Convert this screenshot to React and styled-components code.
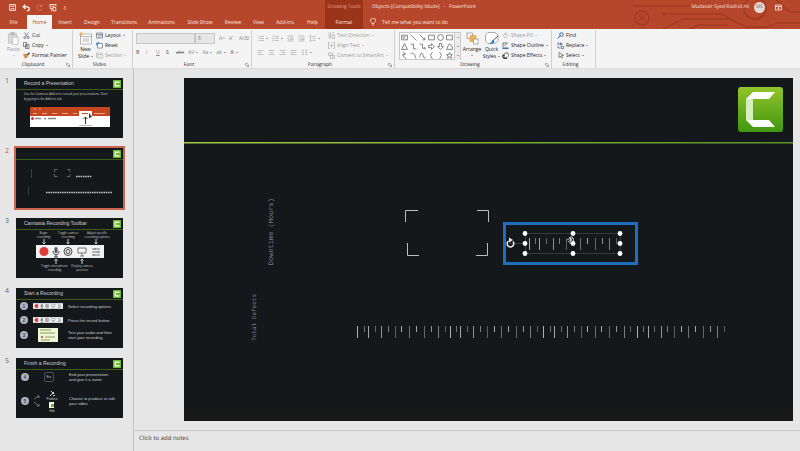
import React from 'react';
import styled, { createGlobalStyle } from 'styled-components';

const GlobalStyle = createGlobalStyle`
  * { box-sizing: border-box; }
  body {
    margin: 0;
    background: #e6e6e6;
    font-family: "Open Sans", "Noto Sans", sans-serif;
    font-size: 5px;
    line-height: 7px;
    color: #222;
    text-rendering: geometricPrecision;
  }
  button, select {
    font: inherit;
    color: inherit;
    border: 0;
    margin: 0;
    padding: 0;
    background: none;
  }
  svg { display: block; flex: none; }
`;

const Page = styled.div`
  display: flex;
  flex-direction: column;
  min-height: 100vh;
  overflow: hidden;
`;

/* ---------- title bar and tabs ---------- */

const Header = styled.header`
  position: relative;
  background: #b7472a;
  color: #fbe9e3;
`;

const Circuit = styled.svg`
  position: absolute;
  top: 0;
  right: 0;
  fill: none;
  stroke: #a03d23;
  stroke-width: 1.5;
`;

const TitleBar = styled.div`
  position: relative;
  display: grid;
  grid-template-columns: 325px 38px 1fr auto;
  align-items: center;
  height: 15px;
`;

const QuickAccess = styled.div`
  display: flex;
  align-items: center;
  gap: 6px;
  padding-left: 9px;
`;

const ToolTitle = styled.div`
  height: 15px;
  line-height: 14px;
  text-align: center;
  background: #9a3519;
  color: #e3a48f;
`;

const DocTitle = styled.div`
  padding-left: 9px;
  white-space: nowrap;
`;

const Account = styled.div`
  display: flex;
  align-items: center;
  gap: 5px;
  padding-right: 18px;
  white-space: nowrap;
`;

const Avatar = styled.span`
  width: 11px;
  height: 11px;
  line-height: 11px;
  margin-right: 5px;
  border-radius: 50%;
  text-align: center;
  background: #e4d9d6;
  color: #6d5a55;
`;

const Tabs = styled.nav`
  position: relative;
  display: grid;
  grid-template-columns: 27px 25px 26px 28px 36px 39px 38px 28px 23px 30px 25px 38px auto;
  justify-content: start;
  height: 14px;
`;

const Tab = styled.button`
  white-space: nowrap;
  background: ${(p) => (p.$active ? '#f5f4f4' : p.$context ? '#9a3519' : 'transparent')};
  color: ${(p) => (p.$active ? '#b7472a' : 'inherit')};
`;

const TellMe = styled.button`
  display: flex;
  align-items: center;
  gap: 6px;
  padding-left: 7px;
`;

/* ---------- ribbon ---------- */

const Ribbon = styled.div`
  display: flex;
  height: 40px;
  background: #f4f4f4;
  border-bottom: 1px solid #dcdcdc;
`;

const Group = styled.section`
  display: flex;
  flex-direction: column;
  width: ${(p) => p.$width}px;
  margin-top: 1px;
  border-right: 1px solid #cfcfcf;
`;

const GroupBody = styled.div`
  display: flex;
  flex: 1;
  gap: ${(p) => p.$gap || 4}px;
  padding-left: ${(p) => p.$pad || 6}px;
`;

const GroupFoot = styled.div`
  display: grid;
  grid-template-columns: 1fr 6px;
  align-items: center;
  text-align: center;
  height: 6px;
  line-height: 6px;
`;

const Stack = styled.div`
  display: grid;
  grid-template-rows: repeat(3, 10px);
  justify-items: start;
`;

const SmallButton = styled.button`
  display: flex;
  align-items: center;
  gap: 2px;
  white-space: nowrap;
  opacity: ${(p) => (p.$off ? 0.45 : 1)};
`;

const BigButton = styled.button`
  display: flex;
  flex-direction: column;
  align-items: center;
  justify-content: flex-start;
  width: ${(p) => p.$width || 15}px;
  padding-top: 2px;
  opacity: ${(p) => (p.$off ? 0.45 : 1)};
  > svg { margin-bottom: 1px; }
  > i { margin-top: 2px; }
`;

const Caret = styled.i`
  width: 0;
  height: 0;
  border: 1px solid transparent;
  border-top-color: #555;
  border-bottom: 0;
`;

const BigLabel = styled.span`
  display: flex;
  align-items: center;
  gap: 2px;
  line-height: 7px;
`;

const Rows = styled.div`
  display: flex;
  flex-direction: column;
  gap: 3px;
  padding-top: 3px;
  color: #888;
`;

const Line = styled.div`
  display: flex;
  align-items: center;
  gap: 4px;
  height: 11px;
`;

const Pick = styled.select`
  appearance: none;
  width: ${(p) => p.$width}px;
  height: 11px;
  padding-left: 2px;
  margin-right: -4px;
  background: #e6e6e6;
  border: 1px solid #c8c8c8;
`;

const Glyph = styled.button`
  display: flex;
  align-items: center;
  gap: 2px;
  min-width: 6px;
  font-weight: ${(p) => (p.$bold ? 700 : 400)};
  font-style: ${(p) => (p.$italic ? 'italic' : 'normal')};
  text-decoration: ${(p) => p.$line || 'none'};
`;

const Gallery = styled.div`
  display: grid;
  grid-template-columns: repeat(6, 9px) 6px;
  grid-template-rows: repeat(3, 9px);
  margin-top: 2px;
  height: 28px;
  border: 1px solid #c9c9c9;
  background: #fdfdfd;
`;

const Shape = styled.button`
  display: grid;
  place-items: center;
  ${(p) => p.$scroll && 'background: #ececec; border-left: 1px solid #c9c9c9;'}
`;

/* ---------- work area ---------- */

const Work = styled.main`
  flex: 1;
  display: grid;
  grid-template-columns: 134px 1fr;
`;

const Pane = styled.aside`
  display: flex;
  flex-direction: column;
  gap: 10px;
  padding: 9px 0 0 5px;
  border-right: 1px solid #c4c4c4;
`;

const ThumbRow = styled.div`
  display: grid;
  grid-template-columns: 11px 107px;
  height: 60px;
  font-size: 7px;
  color: ${(p) => (p.$selected ? '#d0573a' : '#666')};
`;

const Thumb = styled.button`
  display: flex;
  flex-direction: column;
  height: 60px;
  text-align: left;
  overflow: hidden;
  background: #14181a;
  color: #c9ced0;
  font-family: "Liberation Sans", Arial, sans-serif;
  font-size: 4px;
  line-height: 5px;
  outline: ${(p) => (p.$selected ? '2px solid #cb6550' : '0')};
`;

const ThumbHead = styled.div`
  display: flex;
  justify-content: space-between;
  align-items: center;
  width: 100%;
  height: 12px;
  padding: 0 2px 0 8px;
  font-size: 5px;
  border-bottom: 1px solid #3a5e1a;
`;

const ThumbText = styled.p`
  margin: 2px 0 0 8px;
  font-family: "Open Sans", sans-serif;
  font-size: 3px;
  line-height: 5px;
  white-space: nowrap;
`;

const AddinBar = styled.div`
  align-self: center;
  width: 80px;
  margin-top: 5px;
  background: #fff;
`;

const Captions = styled.div`
  display: grid;
  grid-template-columns: ${(p) => p.$cols};
  justify-items: center;
  margin-left: ${(p) => p.$left}px;
  padding-top: ${(p) => p.$top || 0}px;
  font-family: "Open Sans", sans-serif;
  font-size: 3px;
  line-height: 4px;
  text-align: center;
  white-space: nowrap;
`;

const Steps = styled.div`
  display: grid;
  grid-template-columns: 8px 30px 1fr;
  grid-template-rows: ${(p) => p.$rows};
  column-gap: 5px;
  align-items: center;
  width: 100%;
  padding-left: ${(p) => p.$left || 4}px;
`;

const Bullet = styled.span`
  width: 8px;
  height: 8px;
  line-height: 8px;
  border-radius: 50%;
  text-align: center;
  font-size: 5px;
  background: #aeb4c0;
  color: #222;
`;

const Key = styled.span`
  justify-self: center;
  width: 10px;
  height: 10px;
  line-height: 8px;
  text-align: center;
  font-size: 3px;
  border: 1px solid #4b5154;
  border-radius: 2px;
`;

const Outputs = styled.span`
  display: grid;
  grid-template-columns: 7px 22px;
  align-items: center;
  font-size: 3px;
  line-height: 4px;
  text-align: center;
`;

const Editor = styled.div`
  display: flex;
  flex-direction: column;
  min-width: 0;
`;

const Stage = styled.div`
  padding: 9px 7px 9px 50px;
  border-bottom: 1px solid #c9c9c9;
`;

const Slide = styled.div`
  position: relative;
  background: linear-gradient(#14181a 96%, #191919 97%);
`;

const AxisLabel = styled.span`
  position: absolute;
  left: ${(p) => p.$x}%;
  top: ${(p) => p.$y}%;
  writing-mode: vertical-rl;
  transform: rotate(180deg);
  white-space: nowrap;
  font-family: "Liberation Mono", monospace;
  font-size: ${(p) => p.$size}px;
  line-height: 7px;
  color: #7b8188;
`;

const Notes = styled.div`
  padding: 3px 5px;
  font-size: 6px;
  line-height: 8px;
  color: #444;
`;

/* ---------- drawings ---------- */

const Icon = ({ w = 7, h = w, box = '0 0 14 14', stroke = '#555', sw = 1.4, fill = 'none', children }) => (
  <svg width={w} height={h} viewBox={box} fill={fill} stroke={stroke} strokeWidth={sw} aria-hidden="true">
    {children}
  </svg>
);

const icons = {
  cut: <Icon stroke="#4a5a80"><path d="M3 1l6 8M11 1L5 9" /><circle cx="3.5" cy="11" r="2" /><circle cx="10.5" cy="11" r="2" /></Icon>,
  copy: <Icon><path d="M1 1h6v8H1zM5 5h7v8H5zM7 8h3M7 10.500h3" fill="#fff" /></Icon>,
  brush: <Icon stroke="#555"><path d="M8 5l4-4 1 2-4 4z" fill="#444" /><path d="M1 5l4 8 5-5-4-4z" fill="#e88b3c" stroke="#d87a2c" /></Icon>,
  layout: <Icon stroke="#5b6b80"><path d="M1 2h12v10H1z" fill="#fff" /><path d="M1 5h12M6 5v7M8 8h4" /></Icon>,
  reset: <Icon stroke="#5b6b80"><path d="M3 3h10v9H3z" fill="#fff" /><path d="M1 7V2h5M6 2l-2-2M6 2L4 4" stroke="#2f6fb0" /></Icon>,
  section: <Icon><path d="M4 5h9v7H4zM1 2h6M1 2v9M9 2h4" /></Icon>,
  direction: <Icon><path d="M2 1v12M5 1v12M8 6h5v7H8zM8 2h5" /></Icon>,
  align: <Icon><path d="M4 1H1v12h3M10 1h3v12h-3M4 7h6M7 3v8" /></Icon>,
  smart: <Icon><path d="M1 2h8v5H1zM5 7h8v6H5zM8 10h3" /></Icon>,
  fill: <Icon><path d="M2 7l5-5 5 5-5 5zM7 1v5" /></Icon>,
  outline: <Icon stroke="#444"><path d="M2 2h8M2 2v8M5 8l7-7" /><path d="M1 12.500h12" stroke="#2f6fb0" strokeWidth="3" /></Icon>,
  effects: <Icon stroke="#444"><path d="M6 2h6l1 6-3 3H4z" fill="#fff" /><path d="M4 5l-3 3 3 5h6" strokeWidth="2.500" /></Icon>,
  find: <Icon stroke="#2f5f9e" sw={2}><circle cx="9" cy="5" r="3.500" /><path d="M6.500 8L1 13" /></Icon>,
  replace: <Icon stroke="#4a5a80"><path d="M1 6l2-5 2 5M7 1v5h3V3H7M2 8v4h4M8 9h5v4H8z" /></Icon>,
  select: <Icon><path d="M4 1v10l3-3 2 4 2-1-2-4h4z" fill="#fff" /></Icon>,
};

const Launcher = () => (
  <Icon w={4} box="0 0 8 8" stroke="#888"><path d="M1 5V1h4M3 3l4 4M7 3v4H3" /></Icon>
);

const Logo = ({ size }) => (
  <svg width={size} height={size} viewBox="0 0 45 45" aria-hidden="true">
    <rect width="45" height="45" rx="3" fill="#6cbb2a" />
    <path d="M9 9h28v6H16v15h21v6H9z" fill="#fff" />
  </svg>
);

const RecorderIcons = ({ width, height }) => (
  <svg width={width} height={height} viewBox="0 0 68 13" fill="none" stroke="#444" strokeWidth="1" aria-hidden="true">
    <rect width="68" height="13" fill="#f2f2f2" stroke="none" />
    <circle cx="8" cy="6.500" r="4.500" fill="#dd3a3a" stroke="none" />
    <rect x="18.500" y="2" width="3" height="6" rx="1.500" fill="#555" stroke="none" />
    <path d="M17 6c0 5 6 5 6 0M20 10v2M18 12h4" />
    <circle cx="32" cy="6.500" r="4" /><circle cx="32" cy="6.500" r="2" />
    <path d="M42 3h8v5h-8zM44 11h4M46 8v3M56 4h8M56 7h8M56 10h8M59 3v2M62 6v2M58 9v2" stroke="#777" />
  </svg>
);

const Arrows = ({ xs, up }) => (
  <svg width="107" height="6" viewBox="0 0 107 6" fill="none" stroke="#ccc" strokeWidth="1" aria-hidden="true">
    {xs.map((x) => (
      <path key={x} d={up ? `M${x} 6V1M${x - 1.5} 2.500L${x} 1l1.500 1.500` : `M${x} 0v5M${x - 1.5} 3.500L${x} 5l1.500-1.500`} />
    ))}
  </svg>
);

const shapes = [
  'M1 2h10v8H1zM3 5h5M3 7h3', 'M1 1l10 10', 'M1 1l9 9M10 6v4H6', 'M1 2h10v8H1z', 'M6 1a5 5 0 100 10A5 5 0 006 1z', 'M1 2h10v8H1z',
  'M6 1l5 10H1z', 'M1 2h5v8h5', 'M1 2h5v7h5M9 7l2 2-2 2', 'M1 4h5V1l5 5-5 5V8H1z', 'M4 1v5H1l5 5 5-5H8V1z', 'M5 2c6-2 1 4 6 4v5H1z',
  'M3 1c5 0 5 4 1 4s4 6 5 6M3 5l5-2', 'M1 3c5-3 8 1 9 8', 'M1 9C3 0 6 0 7 6s3 5 4 2', 'M8 1C4 1 7 5 4 6c3 1 0 5 4 5', 'M4 1c4 0 1 4 4 5-3 1 0 5-4 5', 'M6 1l1.500 3.500H11L8.300 7l1 4L6 8.700 2.700 11l1-4L1 4.500h3.500z',
];

/* x of each graduation; long and short ones take turns */
const rulerTicks = [
  173, 180, 184, 191, 197, 204, 211, 217, 225, 232, 240, 247, 254, 261, 266, 272, 276, 283, 289, 296,
  303, 310, 317, 324, 332, 339, 346, 353, 359, 366, 370, 377, 383, 390, 397, 403, 411, 417, 425, 432,
  440, 446, 453, 459, 464, 470, 477, 483, 490, 497, 504, 511, 519, 526, 533, 540,
];
const groupTicks = [345, 351, 355, 362, 369, 375, 382, 389, 396, 403, 411, 418, 425, 432];
const shades = [0.75, 0.45, 0.7, 0.4, 0.6, 0.5, 0.35];

const Ticks = ({ xs, y }) => xs.map((x, i) => (
  <rect key={x} x={x} y={y} width="1" height={i % 2 ? 6 : 12} fill="#dfe3e5" opacity={shades[i % shades.length]} />
));

const SlideArt = () => (
  <svg width="100%" viewBox="0 0 609 343" fill="none" aria-hidden="true">
    <defs>
      <linearGradient id="rule"><stop stopColor="#a5cc45" /><stop offset="1" stopColor="#5a9424" /></linearGradient>
      <linearGradient id="logo" x2="0" y2="1"><stop stopColor="#93c42c" /><stop offset="1" stopColor="#3f970e" /></linearGradient>
    </defs>
    <rect y="64" width="609" height="1.500" fill="url(#rule)" />
    <g transform="translate(554 9)">
      <rect width="45" height="45" rx="3" fill="url(#logo)" />
      <path d="M15 5h22l-6 7H8zM8 33h23l6 7H15z" fill="#fff" />
      <path d="M8 12h7v21H8z" fill="#d6edbd" />
    </g>
    <path d="M221.500 144v-11.500H234M293 132.500h11.500V144M223.500 165v12.500H235M292 177.500h11.500V165" stroke="#b9bec1" />
    <Ticks xs={rulerTicks} y={248} />
    <rect x="320.500" y="145.500" width="132" height="40" stroke="#1f6fc0" strokeWidth="3" />
    <path d="M341.500 155.500h95v20h-95zM326 165.500h15" stroke="#43494c" strokeWidth=".7" />
    <Ticks xs={groupTicks} y={160} />
    {[341, 389, 436].map((x) => [155.5, 165.5, 175.5].map((y) => (
      <circle key={`${x}-${y}`} cx={x} cy={y} r="2.400" fill="#fff" />
    )))}
    <path d="M329 163.500a3.300 3.300 0 11-4.500-.5" stroke="#eee" strokeWidth="1.500" />
    <path d="M325 159.500l4 2.500-4 2.500z" fill="#eee" />
    <path d="M383 162l6-3M384 164l5-4M386 166l1-8M385 159l4 5" stroke="#ddd" strokeWidth=".8" />
  </svg>
);

const tabs = ['File', 'Home', 'Insert', 'Design', 'Transitions', 'Animations', 'Slide Show', 'Review', 'View', 'Add-ins', 'Help', 'Format'];

const Command = ({ icon, label, off, menu }) => (
  <SmallButton $off={off}>{icons[icon]}{label}{menu && <Caret />}</SmallButton>
);

const RibbonGroup = ({ name, width, pad, gap, launcher, children }) => (
  <Group $width={width} aria-label={name}>
    <GroupBody $gap={gap} $pad={pad}>{children}</GroupBody>
    <GroupFoot><span>{name}</span>{launcher && <Launcher />}</GroupFoot>
  </Group>
);

const SlideThumb = ({ number, title, selected, children }) => (
  <ThumbRow $selected={selected}>
    <span>{number}</span>
    <Thumb $selected={selected} aria-label={`Slide ${number}`}>
      <ThumbHead><span>{title}</span><Logo size={8} /></ThumbHead>
      {children}
    </Thumb>
  </ThumbRow>
);

const Lines = ({ d }) => <Icon w={7} stroke="#aaa"><path d={d} /></Icon>;

const App = () => (
  <Page>
    <GlobalStyle />
    <Header>
      <Circuit width="170" height="29" viewBox="0 0 170 29">
        <path d="M3 6h60M34 14h58l14 8M33 29l20-10h46l18 8h20l10-4h23M60 29l8-4h30M146 0l14 12h10" />
        <circle cx="12" cy="18" r="7" /><path d="M9 15l6 6M15 15l-6 6" />
        <circle cx="125" cy="8" r="11" strokeWidth="2" /><circle cx="34" cy="14" r="1" />
      </Circuit>
      <TitleBar>
        <QuickAccess>
          <Icon stroke="#fff"><path d="M1 1h12v12H1zM4 1v4h6V1M4 13V9h6v4" /></Icon>
          <Icon w={8} stroke="#fff" sw={2}><path d="M6 1L2 5l4 4M2 5h7c5 0 5 7 0 7" /></Icon>
          <Icon stroke="#d9705a" sw={2}><path d="M11 4a5 5 0 101 5M12 1v4H8" /></Icon>
          <Icon w={8} stroke="#fff"><path d="M1 1h12M2 1v7h4M12 1v3M4 4h5M7 6h5v6H7zM4 13l2-5" /></Icon>
          <Icon w={4} box="0 0 8 8" stroke="#fff"><path d="M2 2h4M2 5l2 2 2-2" /></Icon>
        </QuickAccess>
        <ToolTitle>Drawing Tools</ToolTitle>
        <DocTitle>Objects [Compatibility Mode]&nbsp;&nbsp; - &nbsp;&nbsp;PowerPoint</DocTitle>
        <Account>
          <span>Mudassir Syed Rashid Ali</span>
          <Avatar>MS</Avatar>
          <Icon stroke="#fff"><path d="M1 2h12v10H1zM1 5h12M7 11V7M5 9l2-2 2 2" /></Icon>
        </Account>
      </TitleBar>
      <Tabs>
        {tabs.map((t) => <Tab key={t} $active={t === 'Home'} $context={t === 'Format'}>{t}</Tab>)}
        <TellMe>
          <Icon w={6} h={8} box="0 0 12 16" stroke="#fff"><path d="M4 11c0-3-3-3-3-6a5 5 0 0110 0c0 3-3 3-3 6zM4 14h4" /></Icon>
          Tell me what you want to do
        </TellMe>
      </Tabs>
    </Header>

    <Ribbon>
      <RibbonGroup name="Clipboard" width={73} pad={6} gap={2} launcher>
        <BigButton $off>
          <Icon w={13} h={13} box="0 0 26 28" stroke="#666"><path d="M2 4h18v20H2z" fill="#bbb" /><path d="M7 1h8v5H7z" fill="#777" /><path d="M11 11h12v16H11z" fill="#fff" /></Icon>
          <BigLabel>Paste</BigLabel>
          <Caret />
        </BigButton>
        <Stack>
          <Command icon="cut" label="Cut" />
          <Command icon="copy" label="Copy" menu />
          <Command icon="brush" label="Format Painter" />
        </Stack>
      </RibbonGroup>

      <RibbonGroup name="Slides" width={60} pad={5} gap={3}>
        <BigButton>
          <Icon w={13} h={13} box="0 0 26 26" stroke="#999"><path d="M3 4h22v20H3z" fill="#fff" /><path d="M3 9h22M7 14h14M7 18h14" /><path d="M4 0v8M0 4h8" stroke="#eda93c" strokeWidth="2" /></Icon>
          <BigLabel>New</BigLabel>
          <BigLabel>Slide<Caret /></BigLabel>
        </BigButton>
        <Stack>
          <Command icon="layout" label="Layout" menu />
          <Command icon="reset" label="Reset" />
          <Command icon="section" label="Section" off menu />
        </Stack>
      </RibbonGroup>

      <RibbonGroup name="Font" width={119} pad={3} launcher>
        <Rows>
          <Line>
            <Pick $width={59} aria-label="Font" defaultValue=""><option value="" /></Pick>
            <Pick $width={20} aria-label="Font size"><option>8</option></Pick>
            <span />
            <Glyph>A^</Glyph>
            <Glyph>Aˇ</Glyph>
            <Glyph>A⌫</Glyph>
          </Line>
          <Line>
            <Glyph $bold>B</Glyph>
            <Glyph $italic>I</Glyph>
            <Glyph $line="underline">U</Glyph>
            <Glyph $bold>S</Glyph>
            <Glyph $line="line-through">abc</Glyph>
            <Glyph>AV<Caret /></Glyph>
            <Glyph>Aa<Caret /></Glyph>
            <Glyph>ab<Caret /></Glyph>
            <Glyph $bold>A<Caret /></Glyph>
          </Line>
        </Rows>
      </RibbonGroup>

      <RibbonGroup name="Paragraph" width={143} pad={5} gap={8} launcher>
        <Rows>
          <Line>
            <Glyph><Lines d="M1 3h2M5 3h9M1 7h2M5 7h9M1 11h2M5 11h9" /><Caret /></Glyph>
            <Glyph><Lines d="M2 1v4M5 3h9M2 6v3M5 7h9M2 10v3M5 11h9" /><Caret /></Glyph>
            <Glyph><Lines d="M1 2h12M6 6h7M6 9h7M1 12h12M4 5L1 7l3 3" /></Glyph>
            <Glyph><Lines d="M1 2h12M6 6h7M6 9h7M1 12h12M1 5l3 2-3 3" /></Glyph>
            <Glyph><Lines d="M3 1v12M1 3l2-2 2 2M1 11l2 2 2-2M7 3h6M7 7h6M7 11h6" /><Caret /></Glyph>
          </Line>
          <Line>
            <Glyph><Lines d="M1 3h12M1 7h8M1 11h12" /></Glyph>
            <Glyph><Lines d="M1 3h12M3 7h8M1 11h12" /></Glyph>
            <Glyph><Lines d="M1 3h12M5 7h8M1 11h12" /></Glyph>
            <Glyph><Lines d="M1 3h12M1 7h12M1 11h12" /></Glyph>
            <Glyph><Lines d="M1 3h5M8 3h5M1 7h5M8 7h5M1 11h5M8 11h5" /><Caret /></Glyph>
          </Line>
        </Rows>
        <Stack>
          <Command icon="direction" label="Text Direction" off menu />
          <Command icon="align" label="Align Text" off menu />
          <Command icon="smart" label="Convert to SmartArt" off menu />
        </Stack>
      </RibbonGroup>

      <RibbonGroup name="Drawing" width={157} pad={4} gap={2} launcher>
        <Gallery>
          {[0, 1, 2].map((row) => (
            <React.Fragment key={row}>
              {shapes.slice(row * 6, row * 6 + 6).map((d, i) => (
                <Shape key={i} aria-label="Shape"><Icon w={7} box="0 0 12 12" stroke="#555" sw={1.2}><path d={d} /></Icon></Shape>
              ))}
              <Shape $scroll aria-label="Scroll"><Caret /></Shape>
            </React.Fragment>
          ))}
        </Gallery>
        <BigButton $width={18}>
          <Icon w={13} h={13} box="0 0 26 26" stroke="#888"><path d="M2 2h11v11H2z" fill="#fff" /><path d="M8 7h12v12H8z" fill="#f0b35c" stroke="#e0a04a" /><path d="M15 14h9v10h-9z" fill="#fff" /></Icon>
          <BigLabel>Arrange</BigLabel>
          <Caret />
        </BigButton>
        <BigButton $width={17}>
          <Icon w={14} h={13} box="0 0 28 26" stroke="#888"><path d="M6 1h14l6 5v11l-6 6H6l-5-5V6z" fill="#fff" /><path d="M26 8L15 18" stroke="#555" strokeWidth="2" /><path d="M16 16l-6 8 9-4z" fill="#2f80c8" stroke="#2f80c8" /></Icon>
          <BigLabel>Quick</BigLabel>
          <BigLabel>Styles<Caret /></BigLabel>
        </BigButton>
        <Stack>
          <Command icon="fill" label="Shape Fill" off menu />
          <Command icon="outline" label="Shape Outline" menu />
          <Command icon="effects" label="Shape Effects" menu />
        </Stack>
      </RibbonGroup>

      <RibbonGroup name="Editing" width={44} pad={5}>
        <Stack>
          <Command icon="find" label="Find" />
          <Command icon="replace" label="Replace" menu />
          <Command icon="select" label="Select" menu />
        </Stack>
      </RibbonGroup>
    </Ribbon>

    <Work>
      <Pane>
        <SlideThumb number={1} title="Record a Presentation">
          <ThumbText>
            Use the Camtasia Add-in to record your presentations. Start<br />
            by going to the Add-ins tab.
          </ThumbText>
          <AddinBar>
            <svg width="80" height="20" viewBox="0 0 80 20" fill="none" aria-hidden="true">
              <path d="M0 0h80v9H0z" fill="#c4471f" />
              <path d="M49 4h13v6H49z" fill="#fff" />
              <path d="M3 6.500h4M12 6.500h5M22 6.500h5M32 6.500h6M43 6.500h4M64 6.500h11M4 2h2M9 2h2" stroke="#e9a48c" />
              <path d="M52 6.500h6" stroke="#c4471f" />
              <circle cx="2.500" cy="11.500" r="1.500" fill="#c33" />
              <path d="M5 11.500h6M14 11.500h2M18 11.500h8" stroke="#888" strokeWidth="1.500" />
              <path d="M55.500 17v-7M53.500 12l2-2 2 2" stroke="#333" />
              <path d="M59 6l3 4-3 1z" fill="#333" />
              <path d="M49 18.500h13" stroke="#bbb" />
            </svg>
          </AddinBar>
        </SlideThumb>

        <SlideThumb number={2} selected>
          <svg width="107" height="47" viewBox="0 0 107 47" fill="none" stroke="#888" aria-hidden="true">
            <path d="M38.500 12v-2.500h3M51 9.500h3V12M38.500 14v2.500h3M51 16.500h3V14" stroke="#777" strokeWidth=".8" />
            <path d="M60 16.500h16M30 32.500h66" stroke="#ccc" strokeWidth="1.500" strokeDasharray="1.500 .8" />
            <path d="M15.500 9v9M12.500 27v8" stroke="#3b4044" />
          </svg>
        </SlideThumb>

        <SlideThumb number={3} title="Camtasia Recording Toolbar">
          <Captions $left={19} $top={1} $cols="17px 32px 26px">
            <span>Begin<br />recording</span>
            <span>Toggle camera<br />recording</span>
            <span>Adjust specific<br />recording options</span>
          </Captions>
          <Arrows xs={[28, 52, 80]} />
          <Captions $left={20} $cols="68px"><RecorderIcons width={68} height={13} /></Captions>
          <Arrows up xs={[40, 66]} />
          <Captions $left={24} $cols="29px 26px">
            <span>Toggle microphone<br />recording</span>
            <span>Display camera<br />preview</span>
          </Captions>
        </SlideThumb>

        <SlideThumb number={4} title="Start a Recording">
          <Steps $rows="12px 16px 13px">
            <Bullet>1</Bullet><RecorderIcons width={30} height={6} /><span>Select recording options</span>
            <Bullet>2</Bullet><RecorderIcons width={30} height={6} /><span>Press the record button</span>
            <Bullet>3</Bullet>
            <svg width="30" height="14" viewBox="0 0 30 14" aria-hidden="true">
              <path d="M5 0h20v14H5z" fill="#f3f5d8" />
              <path d="M7 2h11M7 5h15M12 9h10M8 12h9" stroke="#8a9a5a" />
              <circle cx="9" cy="9" r="1" fill="#c33" />
            </svg>
            <span>Test your audio and then<br />start your recording</span>
          </Steps>
        </SlideThumb>

        <SlideThumb number={5} title="Finish a Recording">
          <Steps $rows="14px 34px" $left={5}>
            <Bullet>4</Bullet><Key>Esc</Key><span>End your presentation<br />and give it a name</span>
            <Bullet>5</Bullet>
            <Outputs>
              <svg width="6" height="12" viewBox="0 0 6 12" fill="none" stroke="#999" aria-hidden="true"><path d="M0 4l5-3M3 1h2v2M0 7l5 4M3 11h2V9" strokeWidth=".7" /></svg>
              <span>
                <svg width="22" height="7" viewBox="0 0 22 7" stroke="#ddd" aria-hidden="true"><path d="M9 6l4-4M10 1l3 3M12 6l2-1" /></svg>
                Produce
                <svg width="22" height="8" viewBox="0 0 22 8" aria-hidden="true"><path d="M8 1h5v6H8z" fill="#fff" /><path d="M10 3h3v3h-3z" fill="#6b2" /></svg>
                Edit
              </span>
            </Outputs>
            <span>Choose to produce or edit<br />your video</span>
          </Steps>
        </SlideThumb>
      </Pane>

      <Editor>
        <Stage>
          <Slide>
            <SlideArt />
            <AxisLabel $x={14} $y={35} $size={7}>Downtime (Hours)</AxisLabel>
            <AxisLabel $x={11} $y={63} $size={6}>Total Defects</AxisLabel>
          </Slide>
        </Stage>
        <Notes>Click to add notes</Notes>
      </Editor>
    </Work>
  </Page>
);

export default App;
